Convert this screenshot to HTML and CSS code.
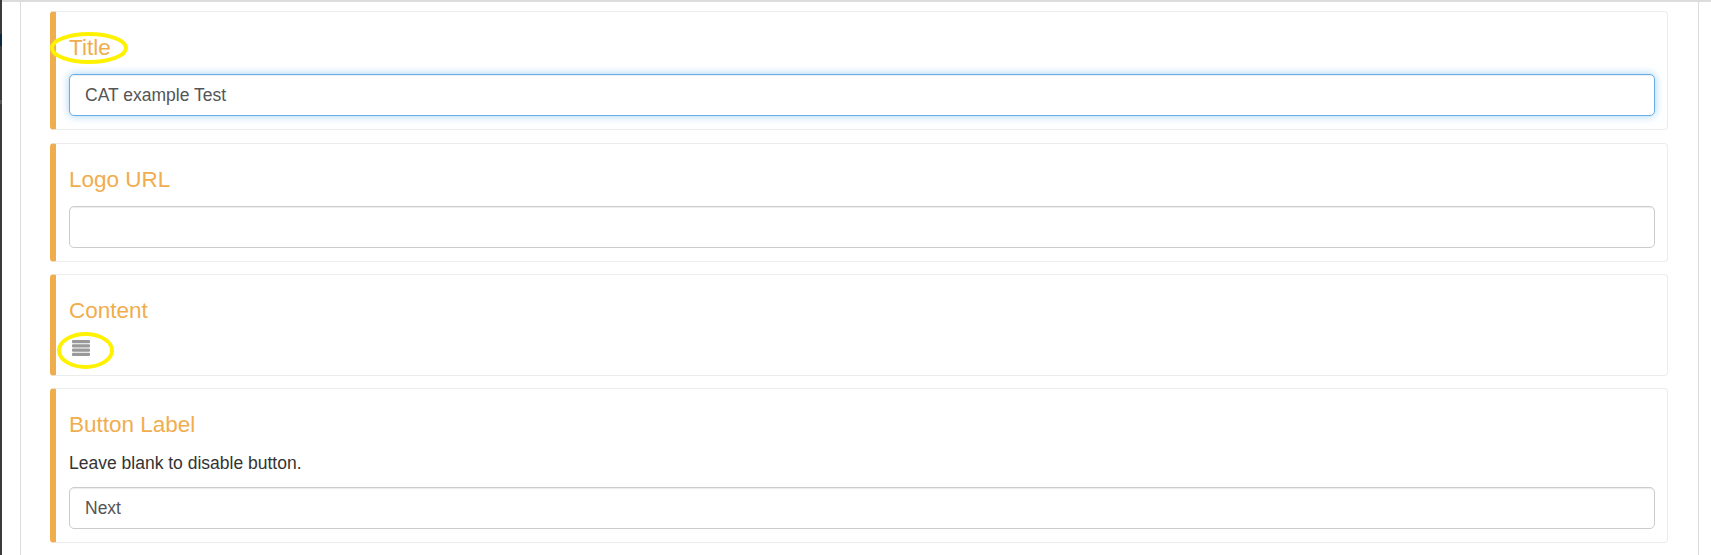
FILE: index.html
```html
<!DOCTYPE html>
<html>
<head>
<meta charset="utf-8">
<link rel="stylesheet" href="styles.css">
</head>
<body>
<div class="shell">
  <div class="side-strip"></div>
  <div class="main">
    <div class="top-band"></div>
    <div class="area">
      <div class="panel">
        <div class="callout">
          <h4 class="callout-title">Title</h4>
          <input class="field field-focus" type="text" value="CAT example Test">
          <svg class="mark mark-title" width="78" height="32" viewBox="0 0 78 32"><ellipse cx="39" cy="16" rx="37" ry="14" fill="none" stroke="#fff200" stroke-width="4"/></svg>
        </div>
        <div class="callout">
          <h4 class="callout-title">Logo URL</h4>
          <input class="field" type="text" value="">
        </div>
        <div class="callout">
          <h4 class="callout-title">Content</h4>
          <div class="icon-row">
            <svg class="stack-icon" width="18" height="16" viewBox="0 0 18 16">
              <rect x="0" y="0" width="18" height="3.2" rx="1" fill="#999"/>
              <rect x="0" y="4.3" width="18" height="3.2" rx="1" fill="#999"/>
              <rect x="0" y="8.6" width="18" height="3.2" rx="1" fill="#999"/>
              <rect x="0" y="12.8" width="18" height="3.2" rx="1" fill="#999"/>
            </svg>
          </div>
          <svg class="mark mark-icon" width="57" height="37" viewBox="0 0 57 37"><ellipse cx="28.5" cy="18.5" rx="26.5" ry="16.5" fill="none" stroke="#fff200" stroke-width="4"/></svg>
        </div>
        <div class="callout">
          <h4 class="callout-title">Button Label</h4>
          <p class="help">Leave blank to disable button.</p>
          <input class="field" type="text" value="Next">
        </div>
      </div>
    </div>
  </div>
</div>
</body>
</html>
```
FILE: styles.css
```css
html, body {
  margin: 0;
  padding: 0;
  background: #fff;
  font-family: "Liberation Sans", Arial, sans-serif;
}
.shell {
  display: flex;
  width: 1711px;
  height: 555px;
  overflow: hidden;
}
.side-strip {
  width: 2px;
  flex: 0 0 2px;
  background: linear-gradient(to bottom, #3b3b3b 0, #3b3b3b 34px, #0f2a3f 34px, #0f2a3f 46px, #3b3b3b 46px, #3b3b3b 100px, #555 100px, #555 104px, #3b3b3b 104px);
}
.main {
  flex: 1;
  display: flex;
  flex-direction: column;
}
.top-band {
  height: 2px;
  background: #dcdcdc;
}
.area {
  flex: 1;
  display: flex;
  padding-left: 18px;
  padding-right: 12px;
}
.panel {
  flex: 1;
  border-left: 1px solid #dcdcdc;
  border-right: 1px solid #dcdcdc;
  padding: 9px 30px 0 29px;
  display: flex;
  flex-direction: column;
  gap: 12.5px;
}
.callout {
  position: relative;
  border: 1px solid #ececec;
  border-left: 6px solid #f0ad4e;
  border-radius: 4px;
  padding: 13px 12px 13px 13px;
  background: #fff;
}
.callout-title {
  margin: 11px 0 14px;
  font-size: 22.5px;
  line-height: 24px;
  font-weight: 400;
  color: #f0ad4e;
}
.field {
  display: block;
  box-sizing: border-box;
  width: 100%;
  height: 42px;
  margin: 0;
  padding: 0 15px;
  border: 1px solid #ccc;
  border-radius: 5px;
  font-family: "Liberation Sans", Arial, sans-serif;
  font-size: 17.5px;
  color: #555;
  background: #fff;
  box-shadow: inset 0 1px 1px rgba(0,0,0,.075);
  outline: none;
}
.field-focus {
  border-color: #66afe9;
  box-shadow: inset 0 1px 1px rgba(0,0,0,.075), 0 0 8px rgba(102,175,233,.6);
}
.help {
  margin: 0 0 12px;
  font-size: 17.5px;
  line-height: 24px;
  color: #333;
}
.icon-row {
  height: 24.5px;
  padding-left: 3px;
  padding-top: 2.5px;
  box-sizing: border-box;
}
.stack-icon {
  display: block;
}
.mark {
  position: absolute;
  pointer-events: none;
}
.mark-title {
  left: -6px;
  top: 20px;
}
.mark-icon {
  left: 1px;
  top: 56.5px;
}
```
